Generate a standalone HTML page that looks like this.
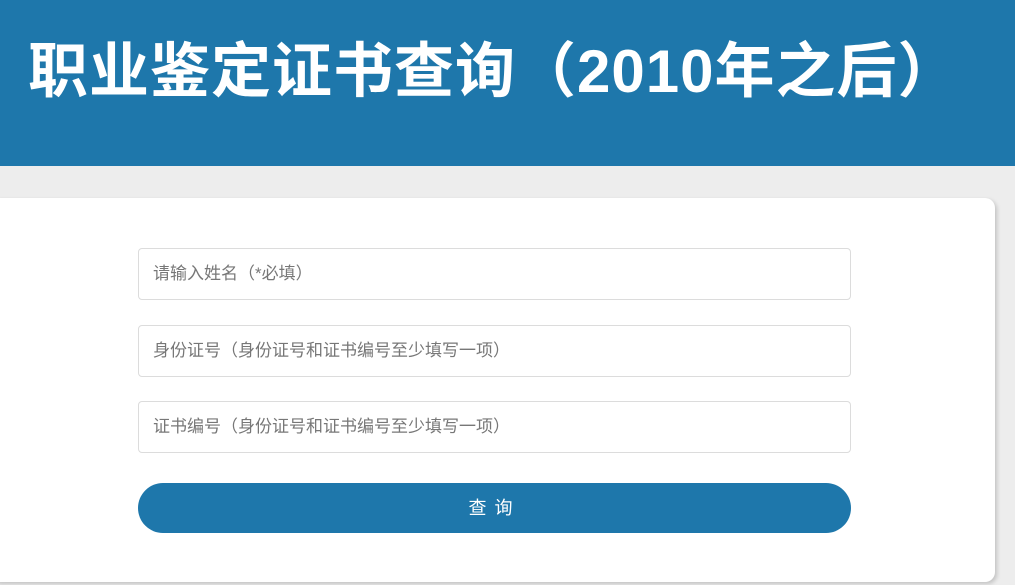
<!DOCTYPE html>
<html><head><meta charset="utf-8"><style>
body{margin:0;width:1015px;height:585px;background:#ededed;overflow:hidden;font-family:"Liberation Sans","Noto Sans CJK SC",sans-serif;position:relative}
.hd{position:absolute;left:0;top:0;width:1015px;height:166px;background:#1e77ab}
.hd h1{position:absolute;left:28px;top:32px;margin:0;color:#fff;font-size:60px;line-height:80px;font-weight:bold;white-space:nowrap;letter-spacing:1px}
.card{position:absolute;left:-10px;top:198px;width:1005px;height:384px;background:#fff;border-radius:10px;box-shadow:2px 2px 4px rgba(0,0,0,.18)}
.in{position:absolute;left:138px;width:711px;height:50px;border:1px solid #dcdcdc;border-radius:4px;background:#fff;box-sizing:content-box;color:#777;font-size:17px;line-height:50px;padding-left:0;text-indent:14px}
.btn{position:absolute;left:138px;top:483px;width:713px;height:50px;border-radius:25px;background:#1e77ab;color:#fff;text-align:center;line-height:50px;font-size:18px;letter-spacing:8px}
</style></head><body>
<div class="hd"><h1>职业鉴定证书查询（2010年之后）</h1></div>
<div class="card"></div>
<div class="in" style="top:248px">请输入姓名（*必填）</div>
<div class="in" style="top:325px">身份证号（身份证号和证书编号至少填写一项）</div>
<div class="in" style="top:401px">证书编号（身份证号和证书编号至少填写一项）</div>
<div class="btn">查询</div>
</body></html>
